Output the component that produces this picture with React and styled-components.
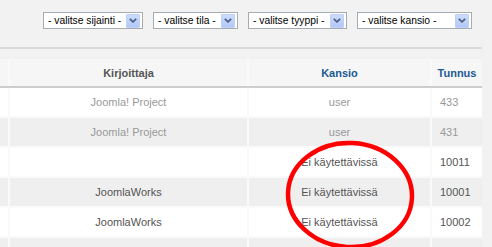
import React from "react";
import styled, { createGlobalStyle } from "styled-components";

const GlobalStyle = createGlobalStyle`
  html, body { margin: 0; padding: 0; background: #f2f2f2; }
  body { font-family: "Liberation Sans", Arial, sans-serif; }
`;

const Page = styled.div`
  position: relative;
  width: 492px;
  height: 247px;
  overflow: hidden;
  background: #f2f2f2;
`;

const FilterBar = styled.div`
  box-sizing: border-box;
  width: 482px;
  height: 49px;
  padding: 12px 10px 0 0;
  display: flex;
  justify-content: flex-end;
  align-items: flex-start;
  gap: 10px;
  border-bottom: 2px solid #dadada;
`;

const SelectBox = styled.div`
  box-sizing: border-box;
  width: ${(p) => p.$w}px;
  height: 17px;
  border: 1px solid #a5acb2;
  background: #fff;
  display: flex;
  align-items: center;
  justify-content: space-between;
  padding: 0 2px 0 4px;
  font-size: 10.3px;
  color: #000;
  white-space: nowrap;
`;

const DropButton = styled.span`
  box-sizing: border-box;
  width: 14px;
  height: 14px;
  border: 1px solid #bcd0f8;
  border-radius: 1px;
  background: linear-gradient(#cddcfd, #b3c8f6);
  display: flex;
  align-items: center;
  justify-content: center;
`;

const Spacer = styled.div`
  height: 10px;
`;

const Table = styled.div`
  width: 482px;
  display: flex;
  flex-direction: column;
`;

const Row = styled.div`
  display: grid;
  grid-template-columns: 8px 237px 181px 50px;
  column-gap: 2px;
  background: #fafafa;
  height: ${(p) => (p.$head ? 27 : 28)}px;
  border-bottom: 2px solid ${(p) => (p.$head ? "#cdcdcd" : "#fafafa")};
`;

const Cell = styled.div`
  background: ${(p) => (p.$head ? "#f6f6f6" : p.$alt ? "#efefef" : "#fff")};
  display: flex;
  align-items: center;
  justify-content: ${(p) => (p.$left ? "flex-start" : "center")};
  padding-left: ${(p) => (p.$left ? "8px" : "0")};
  font-size: 11px;
  font-weight: ${(p) => (p.$head ? 700 : 400)};
  color: ${(p) => p.$color || "#555"};
  white-space: nowrap;
  overflow: hidden;
`;

const Annotation = styled.svg`
  position: absolute;
  left: 0;
  top: 0;
  pointer-events: none;
`;

const Chevron = () => (
  <svg width="8" height="5" viewBox="0 0 8 5">
    <path d="M0.8 0.8 L4 3.8 L7.2 0.8" fill="none" stroke="#4d6185" strokeWidth="1.8" />
  </svg>
);

const Select = ({ w, label }) => (
  <SelectBox $w={w}>
    <span>{label}</span>
    <DropButton>
      <Chevron />
    </DropButton>
  </SelectBox>
);

const rows = [
  { author: "Joomla! Project", folder: "user", id: "433", muted: true },
  { author: "Joomla! Project", folder: "user", id: "431", muted: true },
  { author: "", folder: "Ei käytettävissä", id: "10011" },
  { author: "JoomlaWorks", folder: "Ei käytettävissä", id: "10001" },
  { author: "JoomlaWorks", folder: "Ei käytettävissä", id: "10002" },
  { author: "", folder: "", id: "" },
];

export default function App() {
  return (
    <>
      <GlobalStyle />
      <Page>
        <FilterBar>
          <Select w={100} label="- valitse sijainti -" />
          <Select w={85} label="- valitse tila -" />
          <Select w={99} label="- valitse tyyppi -" />
          <Select w={115} label="- valitse kansio -" />
        </FilterBar>
        <Spacer />
        <Table>
          <Row $head>
            <Cell $head />
            <Cell $head>Kirjoittaja</Cell>
            <Cell $head $color="#1b5a94">Kansio</Cell>
            <Cell $head $color="#1b5a94">Tunnus</Cell>
          </Row>
          {rows.map((r, i) => {
            const alt = i % 2 === 1;
            const c = r.muted ? "#999" : "#555";
            return (
              <Row key={i}>
                <Cell $alt={alt} />
                <Cell $alt={alt} $color={c}>{r.author}</Cell>
                <Cell $alt={alt} $color={c}>{r.folder}</Cell>
                <Cell $alt={alt} $color={c} $left>{r.id}</Cell>
              </Row>
            );
          })}
        </Table>
        <Annotation width="492" height="247" viewBox="0 0 492 247">
          <ellipse cx="350" cy="195" rx="62" ry="52" fill="none" stroke="#ff0000" strokeWidth="4.5" transform="rotate(3 350 195)" />
        </Annotation>
      </Page>
    </>
  );
}
